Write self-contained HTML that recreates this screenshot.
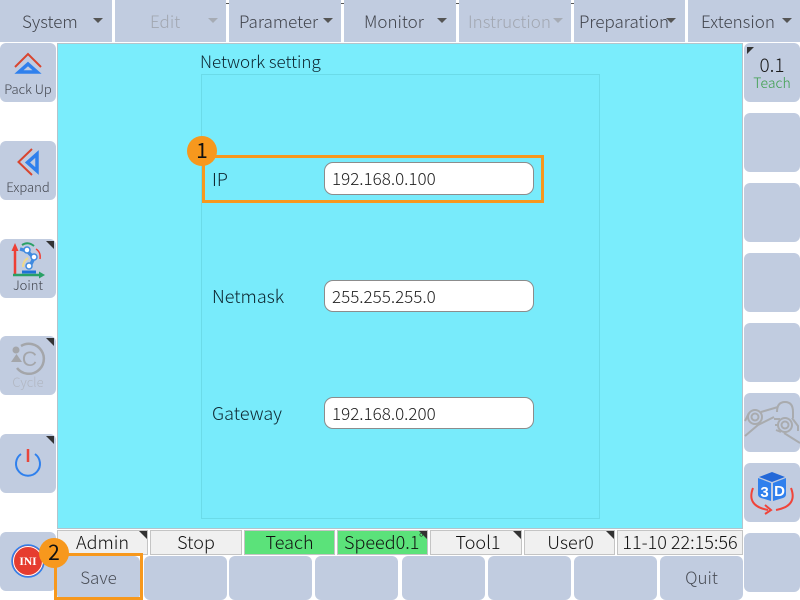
<!DOCTYPE html>
<html><head><meta charset="utf-8">
<style>
html,body{margin:0;padding:0;background:#fff}
body{width:800px;height:600px;position:relative;overflow:hidden;font-family:"Noto Sans CJK SC","Liberation Sans",sans-serif;font-weight:300;color:#444}
.a{position:absolute;box-sizing:border-box}
.t{position:absolute;white-space:nowrap;line-height:1;box-sizing:border-box}
.top{position:absolute;top:0;height:42px;background:#c1cce0}
.top span{position:absolute;top:10px;line-height:22px;font-size:17px;white-space:nowrap;color:#41444c}
.top i{position:absolute;top:18px;width:0;height:0;border-left:5px solid transparent;border-right:5px solid transparent;border-top:5px solid #555}
.dis span{color:#a2a7b1}.dis i{border-top-color:#a6abb4}
.side{position:absolute;width:56px;height:59px;background:#c1cce0;border-radius:6px}
.side .l{position:absolute;left:0;right:0;text-align:center;font-size:13px;line-height:16px;color:#41444c;white-space:nowrap}
.c{position:absolute;right:2px;top:2px;width:0;height:0;border-top:8px solid #333;border-left:8px solid transparent}
.st{position:absolute;top:530px;height:25px;background:#f0f0f0;border:1px solid #c4c4c4;box-sizing:border-box;text-align:center;font-size:18px;line-height:22px;color:#111;white-space:nowrap}
.st .c{right:0;top:0}
.bt{position:absolute;top:556px;height:44px;background:#c1cce0;border-radius:6px;text-align:center;font-size:17px;line-height:42px;color:#4a4e57}
.lab{position:absolute;left:212px;font-size:18px;line-height:24px;color:#0d2630;white-space:nowrap}
.inp{position:absolute;left:324px;width:210px;height:33px;background:#fff;border:1px solid #8c8c8c;border-radius:9px;box-sizing:border-box;font-size:17px;line-height:30px;padding-left:7px;color:#222}
.bad{position:absolute;width:30px;height:30px;border-radius:50%;background:#f7981d;text-align:center;color:#111;font-size:21px;line-height:29px;font-weight:400}
</style></head><body>

<div class="a" style="left:216px;top:-4px;width:367px;height:8px;background:#fff;border:1px solid #555"></div>
<div class="a" style="left:472px;top:0;width:1px;height:3px;background:#555"></div>
<div class="top" style="left:0;width:112px"><span style="left:22px">System</span><i style="left:93px"></i></div>
<div class="top dis" style="left:115px;width:111px"><span style="left:35px">Edit</span><i style="left:93px"></i></div>
<div class="top" style="left:229px;width:112px"><span style="left:10px">Parameter</span><i style="left:94px"></i></div>
<div class="top" style="left:344px;width:112px"><span style="left:20px">Monitor</span><i style="left:93px"></i></div>
<div class="top dis" style="left:459px;width:112px"><span style="left:9px">Instruction</span><i style="left:94px"></i></div>
<div class="top" style="left:574px;width:111px"><span style="left:5px">Preparation</span><i style="left:92px"></i></div>
<div class="top" style="left:688px;width:112px"><span style="left:13px">Extension</span><i style="left:94px"></i></div>

<div class="a" style="left:57px;top:43px;width:686px;height:486px;background:#7aedfc;border:1px solid #b4c4cc"></div>
<div class="a" style="left:201px;top:74px;width:399px;height:445px;background:#78ebfb;border:1px solid #6bdbe8"></div>
<div class="t" style="left:200px;top:49px;font-size:17px;line-height:23px;color:#0d2630">Network setting</div>

<div class="lab" style="top:167px">IP</div>
<div class="inp" style="top:162px">192.168.0.100</div>
<div class="lab" style="top:284px">Netmask</div>
<div class="inp" style="top:280px;height:32px;line-height:29px">255.255.255.0</div>
<div class="lab" style="top:401px">Gateway</div>
<div class="inp" style="top:397px;height:32px;line-height:29px">192.168.0.200</div>

<div class="a" style="left:202px;top:155px;width:342px;height:48px;border:3px solid #f7981d"></div>
<div class="bad" style="left:187px;top:136px">1</div>

<!-- left column -->
<div class="side" style="left:0;top:43px">
<svg class="a" style="left:0;top:0" width="56" height="40"><path d="M15 24 L28 11 L41 24" fill="none" stroke="#d9452f" stroke-width="2"/><path d="M28 21 L37 29 L19 29 Z" fill="none" stroke="#2f80ed" stroke-width="3.500"/></svg>
<div class="l" style="top:38px">Pack Up</div></div>
<div class="side" style="left:0;top:141px">
<svg class="a" style="left:0;top:0" width="56" height="40"><path d="M32 8 L18.500 21 L32 34" fill="none" stroke="#d9452f" stroke-width="2"/><path d="M37 13 L37 30 L27.500 21.500 Z" fill="none" stroke="#2f80ed" stroke-width="3.500"/></svg>
<div class="l" style="top:38px">Expand</div></div>
<div class="side" style="left:0;top:239px"><div class="c"></div>
<svg class="a" style="left:0;top:0" width="56" height="42">
<path d="M15 36V8" stroke="#ee3f35" stroke-width="2.500" fill="none"/><path d="M11.500 12L15 4L18.500 12Z" fill="#ee3f35"/>
<path d="M13 36H40" stroke="#2aa066" stroke-width="2.500" fill="none"/><path d="M39 32.500L45 36L39 39.500Z" fill="#2aa066"/>
<path d="M22 33H36" stroke="#1f72d8" stroke-width="3" fill="none"/><path d="M29 29L34 19" stroke="#3f8ae0" stroke-width="3.500" fill="none"/><path d="M34 19L27 12L20 10" stroke="#3f8ae0" stroke-width="3.500" fill="none"/>
<circle cx="29" cy="27" r="3" fill="#fff" stroke="#3f8ae0" stroke-width="1.500"/><circle cx="34" cy="18" r="3" fill="#fff" stroke="#3f8ae0" stroke-width="1.500"/><circle cx="27" cy="11" r="3" fill="#fff" stroke="#3f8ae0" stroke-width="1.500"/>
<path d="M23 28Q23 22 28 19" stroke="#f0d98a" stroke-width="2" fill="none"/><path d="M36 10Q41 13 40 20" stroke="#ee3f35" stroke-width="1.500" fill="none"/><path d="M22 6Q28 2 34 7" stroke="#2aa066" stroke-width="2" fill="none"/>
</svg>
<div class="l" style="top:38px">Joint</div></div>
<div class="side" style="left:0;top:336px"><div class="c"></div>
<svg class="a" style="left:0;top:0" width="56" height="42"><path d="M21 10 A15 15 0 1 1 17 32" fill="none" stroke="#a4a6aa" stroke-width="2.500"/><path d="M11 26H22L16.500 18Z" fill="#a4a6aa"/><circle cx="16" cy="14" r="3.500" fill="#a4a6aa"/><text x="29.500" y="30" text-anchor="middle" font-size="21" fill="#a4a6aa" font-family="Liberation Sans">C</text></svg>
<div class="l" style="top:38px;color:#b1b6c1">Cycle</div></div>
<div class="side" style="left:0;top:434px"><div class="c"></div>
<svg class="a" style="left:0;top:0" width="56" height="59"><path d="M21 20 A12 12 0 1 0 35 20" fill="none" stroke="#2f80ed" stroke-width="2"/><path d="M28 15V28" stroke="#e8453a" stroke-width="2.500"/></svg></div>
<div class="side" style="left:0;top:532px">
<svg class="a" style="left:0;top:0" width="56" height="59"><circle cx="28" cy="29" r="16" fill="#e63c2f" stroke="#2f80ed" stroke-width="1.500"/><circle cx="28" cy="29" r="14.500" fill="none" stroke="#fff" stroke-width="1"/><text x="28" y="33" text-anchor="middle" font-size="11.500" font-weight="700" fill="#fff" font-family="Liberation Serif">INI</text></svg></div>

<!-- right column -->
<div class="side" style="left:744px;top:43px">
<div class="a" style="left:3px;top:4px;width:0;height:0;border-top:7px solid #333;border-right:7px solid transparent"></div>
<div class="l" style="top:10px;font-size:19px;line-height:24px;color:#1a1a1a;">0.1</div>
<div class="l" style="top:32px;font-size:14px;color:#3a9e4a">Teach</div></div>
<div class="side" style="left:744px;top:113px"></div>
<div class="side" style="left:744px;top:183px"></div>
<div class="side" style="left:744px;top:253px"></div>
<div class="side" style="left:744px;top:323px"></div>
<div class="side" style="left:744px;top:393px">
<svg class="a" style="left:0;top:0" width="56" height="59" fill="none" stroke="#a9abae" stroke-width="2"><circle cx="11" cy="24" r="7"/><circle cx="11" cy="24" r="3.500"/><path d="M1 28L5 20M1 43L14 32L30 24M17 19L34 14"/><circle cx="41" cy="32" r="7"/><circle cx="41" cy="32" r="3.500"/><path d="M33 19Q33 9 41 9Q49 9 49 19V25"/><path d="M30 26L36 26M31 32H35M32 37L37 39M40 40L56 50M48 25L54 33V38"/></svg></div>
<div class="side" style="left:744px;top:463px">
<svg class="a" style="left:0;top:0" width="56" height="59">
<path d="M28 9L41 14L28 19L15 14Z" fill="#2468d8"/><path d="M14 15L27 20V38L17 35Q14 34 14 31Z" fill="#2f80ed"/><path d="M29 20L42 15V31Q42 34 39 35L29 38Z" fill="#2f80ed"/>
<text x="20.500" y="34" text-anchor="middle" font-size="15" font-weight="700" fill="#fff" font-family="Liberation Sans">3</text><text x="35.500" y="33" text-anchor="middle" font-size="15" font-weight="700" fill="#fff" font-family="Liberation Sans">D</text>
<path d="M9 25Q2 43 24 47M47 25Q54 43 32 47" fill="none" stroke="#f0443a" stroke-width="2"/><path d="M21 42L27 47L21 51" fill="none" stroke="#f0443a" stroke-width="2"/></svg></div>
<div class="side" style="left:744px;top:533px"></div>

<!-- status bar -->
<div class="st" style="left:57px;width:91px">Admin<div class="c"></div></div>
<div class="st" style="left:150px;width:92px">Stop</div>
<div class="st" style="left:244px;width:91px;background:#5be27a">Teach</div>
<div class="st" style="left:337px;width:91px;background:#5be27a;text-align:left;padding-left:6px;overflow:hidden">Speed0.1<span style="position:absolute;left:81px;top:-4px;font-size:13px">°</span><div class="c"></div></div>
<div class="st" style="left:430px;width:92px;padding-left:4px">Tool1<div class="c"></div></div>
<div class="st" style="left:524px;width:91px;padding-left:2px">User0<div class="c"></div></div>
<div class="st" style="left:617px;width:126px">11-10 22:15:56</div>

<!-- bottom buttons -->
<div class="bt" style="left:57px;width:83px">Save</div>
<div class="bt" style="left:144px;width:83px"></div>
<div class="bt" style="left:229px;width:83px"></div>
<div class="bt" style="left:315px;width:83px"></div>
<div class="bt" style="left:402px;width:83px"></div>
<div class="bt" style="left:488px;width:83px"></div>
<div class="bt" style="left:574px;width:83px"></div>
<div class="bt" style="left:660px;width:83px">Quit</div>

<div class="a" style="left:54px;top:553px;width:89px;height:47px;border:3px solid #f7981d"></div>
<div class="bad" style="left:39px;top:538px">2</div>
</body></html>
